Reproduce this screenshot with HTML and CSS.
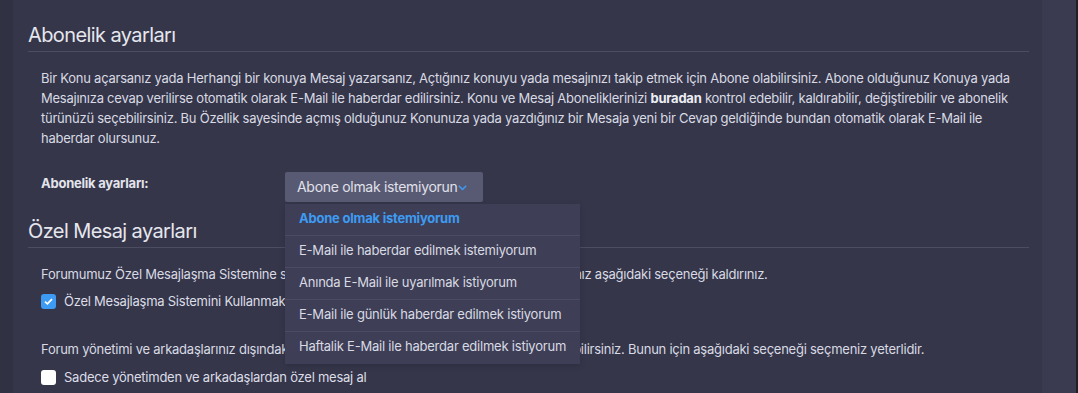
FILE: index.html
```html
<!DOCTYPE html>
<html lang="tr">
<head>
<meta charset="utf-8">
<title>Abonelik ayarları</title>
<link rel="stylesheet" href="styles.css">
</head>
<body>
<div class="page">
  <div class="gutter"></div>
  <main class="panel">
    <section class="section">
      <h2 class="section-title">Abonelik ayarları</h2>
      <p class="desc">Bir Konu açarsanız yada Herhangi bir konuya Mesaj yazarsanız, Açtığınız konuyu yada mesajınızı takip etmek için Abone olabilirsiniz. Abone olduğunuz Konuya yada Mesajınıza cevap verilirse otomatik olarak E-Mail ile haberdar edilirsiniz. Konu ve Mesaj Aboneliklerinizi <b>buradan</b> kontrol edebilir, kaldırabilir, değiştirebilir ve abonelik türünüzü seçebilirsiniz. Bu Özellik sayesinde açmış olduğunuz Konunuza yada yazdığınız bir Mesaja yeni bir Cevap geldiğinde bundan otomatik olarak E-Mail ile haberdar olursunuz.</p>
      <div class="form-row">
        <div class="form-label">Abonelik ayarları:</div>
        <div class="select-wrap">
          <button class="select" type="button">Abone olmak istemiyorun<svg class="chev" width="9" height="6" viewBox="0 0 9 6"><path d="M0.8 0.8 L4.5 4.5 L8.2 0.8" fill="none" stroke="#3d9bf3" stroke-width="1.5"/></svg></button>
          <ul class="menu">
            <li class="menu-item active">Abone olmak istemiyorum</li>
            <li class="menu-item">E-Mail ile haberdar edilmek istemiyorum</li>
            <li class="menu-item">Anında E-Mail ile uyarılmak istiyorum</li>
            <li class="menu-item">E-Mail ile günlük haberdar edilmek istiyorum</li>
            <li class="menu-item">Haftalik E-Mail ile haberdar edilmek istiyorum</li>
          </ul>
        </div>
      </div>
    </section>
    <section class="section section-pm">
      <h2 class="section-title">Özel Mesaj ayarları</h2>
      <p class="desc">Forumumuz Özel Mesajlaşma Sistemine sahiptir. Eğer siz bu sistemi kullanmak istemiyorsanız aşağıdaki seçeneği kaldırınız.</p>
      <label class="check-row"><span class="box checked"><svg width="9" height="7" viewBox="0 0 9 7"><path d="M1 3.6 L3.4 5.8 L8 1.2" fill="none" stroke="#fff" stroke-width="1.8"/></svg></span>Özel Mesajlaşma Sistemini Kullanmak istiyorum</label>
      <p class="desc desc-gap">Forum yönetimi ve arkadaşlarınız dışındaki diğer kişilerden özel mesaj almamayı tercih edebilirsiniz. Bunun için aşağıdaki seçeneği seçmeniz yeterlidir.</p>
      <label class="check-row check-row-2"><span class="box"></span>Sadece yönetimden ve arkadaşlardan özel mesaj al</label>
    </section>
  </main>
  <aside class="side"></aside>
  <div class="scroll"></div>
</div>
</body>
</html>
```
FILE: styles.css
```css
* { box-sizing: border-box; }
html, body { margin: 0; padding: 0; }
body {
  background: #35364a;
  font-family: Inter, "Noto Sans", sans-serif;
  color: #dcdde6;
  overflow: hidden;
}
.page {
  display: flex;
  height: 393px;
  width: 1078px;
  overflow: hidden;
}
.gutter { width: 13px; background: #303143; flex: none; }
.panel {
  width: 1029px;
  flex: none;
  background: #35364a;
  padding: 21px 13px 0 15px;
}
.side { width: 34px; flex: none; background: #3a3b50; }
.scroll { width: 2px; flex: none; background: #1f2024; }

.section-title {
  margin: 0;
  font-size: 20px;
  font-weight: 400;
  line-height: 28px;
  color: #e6e7ee;
  padding-bottom: 2px;
  border-bottom: 1px solid #4c4d61;
  letter-spacing: -0.6px;
}
.desc {
  margin: 16px 13px 0 13px;
  font-size: 13px;
  line-height: 20px;
  color: #d9dae3;
  letter-spacing: -0.24px;
}
.desc b { font-weight: 700; color: #eceef4; }
.desc-gap { margin-top: 28px; }

.form-row {
  display: flex;
  margin: 24px 13px 0 13px;
}
.form-label {
  width: 244px;
  flex: none;
  padding-top: 1px;
  font-size: 13px;
  line-height: 20px;
  font-weight: 700;
  color: #e3e4ec;
  letter-spacing: -0.24px;
}
.select-wrap { position: relative; }
.select {
  display: flex;
  align-items: center;
  gap: 1px;
  height: 30px;
  padding: 0 16px 0 12px;
  border: 0;
  border-radius: 2px;
  background: #585a73;
  color: #e0e1ea;
  font-family: Inter, "Noto Sans", sans-serif;
  font-size: 14px;
  line-height: 20px;
  letter-spacing: -0.3px;
}
.chev { margin-top: 2px; }
.menu {
  position: absolute;
  top: 32px;
  left: 0;
  width: 295px;
  margin: 0;
  padding: 0;
  list-style: none;
  background: #3e3f56;
  box-shadow: 0 2px 6px rgba(0,0,0,0.15);
  z-index: 5;
}
.menu-item {
  padding: 5px 14px 8px;
  font-size: 13px;
  line-height: 18px;
  color: #d9dae3;
  border-bottom: 1px solid #4b4c63;
  white-space: nowrap;
  letter-spacing: -0.22px;
}
.menu-item:last-child { border-bottom-color: #3e3f56; }
.menu-item.active { color: #3d9bf3; font-weight: 700; }

.section-pm { margin-top: 15px; }
.check-row {
  display: flex;
  align-items: center;
  gap: 8px;
  margin: 7px 13px 0 13px;
  font-size: 13px;
  line-height: 20px;
  color: #dcdde6;
  letter-spacing: -0.24px;
}
.check-row-2 { margin-top: 8px; }
.box {
  width: 15px;
  height: 15px;
  flex: none;
  border-radius: 3px;
  background: #ffffff;
  display: flex;
  align-items: center;
  justify-content: center;
}
.box.checked { background: #3d9bf3; }
```
